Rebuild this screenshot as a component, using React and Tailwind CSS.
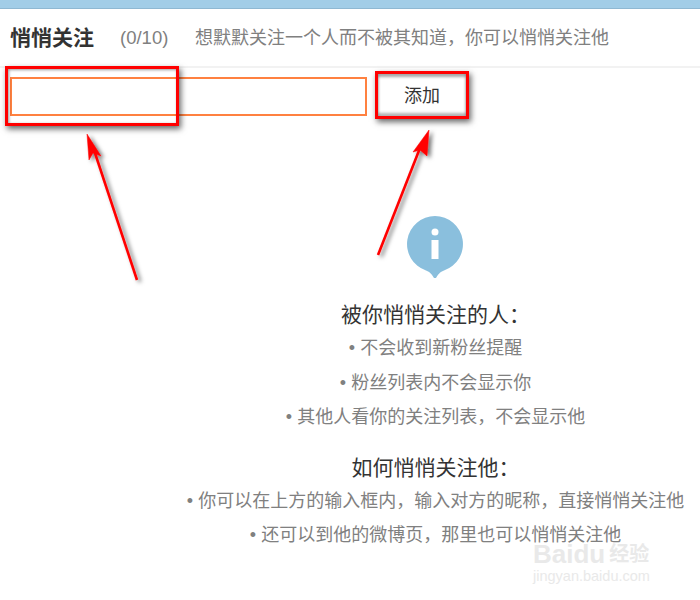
const cjk = "font-['Liberation_Sans','Noto_Sans_CJK_SC',sans-serif]";

const followedRules = ['不会收到新粉丝提醒', '粉丝列表内不会显示你', '其他人看你的关注列表，不会显示他'];
const howToRules = ['你可以在上方的输入框内，输入对方的昵称，直接悄悄关注他', '还可以到他的微博页，那里也可以悄悄关注他'];

function InfoIcon() {
    return (
        <svg width="58" height="64" viewBox="0 0 58 64" className="block">
            <path d="M29 1a28 28 0 0 1 9 54.5c-3 1-5 2.500-8 7.500h-2c-3-5-5-6.500-8-7.500A28 28 0 0 1 29 1z" fill="#8abfdd" />
            <circle cx="29" cy="17" r="3.500" fill="#fff" />
            <rect x="25.500" y="25" width="7" height="19" fill="#fff" />
        </svg>
    );
}

function Arrows() {
    return (
        <svg width="700" height="300" viewBox="0 0 700 300" className="absolute left-0 top-0 pointer-events-none">
            <defs>
                <filter id="arrowShadow" x="-50%" y="-50%" width="200%" height="200%">
                    <feDropShadow dx="3" dy="2" stdDeviation="2" floodColor="#000" floodOpacity="0.55" />
                </filter>
            </defs>
            <g filter="url(#arrowShadow)" fill="#ff0000" stroke="#ff0000">
                <path d="M137 280L94 150" strokeWidth="2.600" fill="none" />
                <path d="M87 134L101 156L93 153L89 160z" strokeWidth="0.500" />
                <path d="M378 255L420 148" strokeWidth="2.600" fill="none" />
                <path d="M429 130L427 156L420 150L413 152z" strokeWidth="0.500" />
            </g>
        </svg>
    );
}

function RuleList({ title, rules }) {
    return (
        <div className="flex flex-col items-center">
            <h3 className="text-[21px] leading-[30px] font-normal text-[#333] mb-[1px]">{title}</h3>
            {rules.map(rule => (
                <p key={rule} className="text-[18px] leading-[34.600px] text-[#808080] whitespace-nowrap">
                    <span className="text-[#808080]">• </span>{rule}
                </p>
            ))}
        </div>
    );
}

export default function App() {
    return (
        <div className={`relative w-[700px] h-[600px] overflow-hidden bg-white ${cjk}`}>
            <div className="h-[9px] bg-[#a2cde7] border-b border-[#8fb8d2]" />

            {/* Header */}
            <div className="h-[59px] flex items-center pl-[10px] pt-[1px] border-b-2 border-[#f2f2f2]">
                <h1 className="text-[21px] font-bold text-[#333] w-[108px]">悄悄关注</h1>
                <span className="text-[18.500px] text-[#808080] w-[77px] whitespace-nowrap pl-[2px]">(0/10)</span>
                <span className="text-[18px] text-[#808080] whitespace-nowrap">想默默关注一个人而不被其知道，你可以悄悄关注他</span>
            </div>

            {/* Form */}
            <div className="flex items-center pl-[10px] pt-[9px]">
                <input className="w-[357px] h-[39px] border-2 border-[#ff8140] outline-none bg-white" />
                <button className="w-[88px] h-[38px] ml-[11px] text-[18px] text-[#333] bg-white">添加</button>
            </div>

            {/* Info */}
            <div className="flex justify-center pl-[170px] pt-[99px]">
                <InfoIcon />
            </div>
            <div className="pl-[171px] pt-[21px]">
                <RuleList title="被你悄悄关注的人：" rules={followedRules} />
                <div className="h-[18px]" />
                <RuleList title="如何悄悄关注他：" rules={howToRules} />
            </div>

            {/* Annotations */}
            <div className="absolute left-[5px] top-[66px] w-[174px] h-[60px] border-[3px] border-[#ff0000] shadow-[2px_3px_6px_rgba(0,0,0,0.6),inset_1px_1px_3px_rgba(0,0,0,0.4)]" />
            <div className="absolute left-[375px] top-[71px] w-[94px] h-[48px] border-[3px] border-[#ff0000] shadow-[2px_3px_6px_rgba(0,0,0,0.6),inset_0_3px_3px_rgba(0,0,0,0.35),inset_0_-3px_3px_rgba(0,0,0,0.3)]" />
            <Arrows />

            {/* Watermark */}
            <div className="absolute left-[533px] top-[544px] w-[160px] text-[#e9e9e9] pointer-events-none">
                <div className="flex items-center gap-[4px] h-[20px]">
                    <span className="text-[26px] font-bold leading-[20px]">Baidu</span>
                    <span className="text-[20px] font-bold leading-[20px]">经验</span>
                </div>
                <div className="text-[14.500px] leading-[18px] mt-[3px] whitespace-nowrap">jingyan.baidu.com</div>
            </div>
        </div>
    );
}
